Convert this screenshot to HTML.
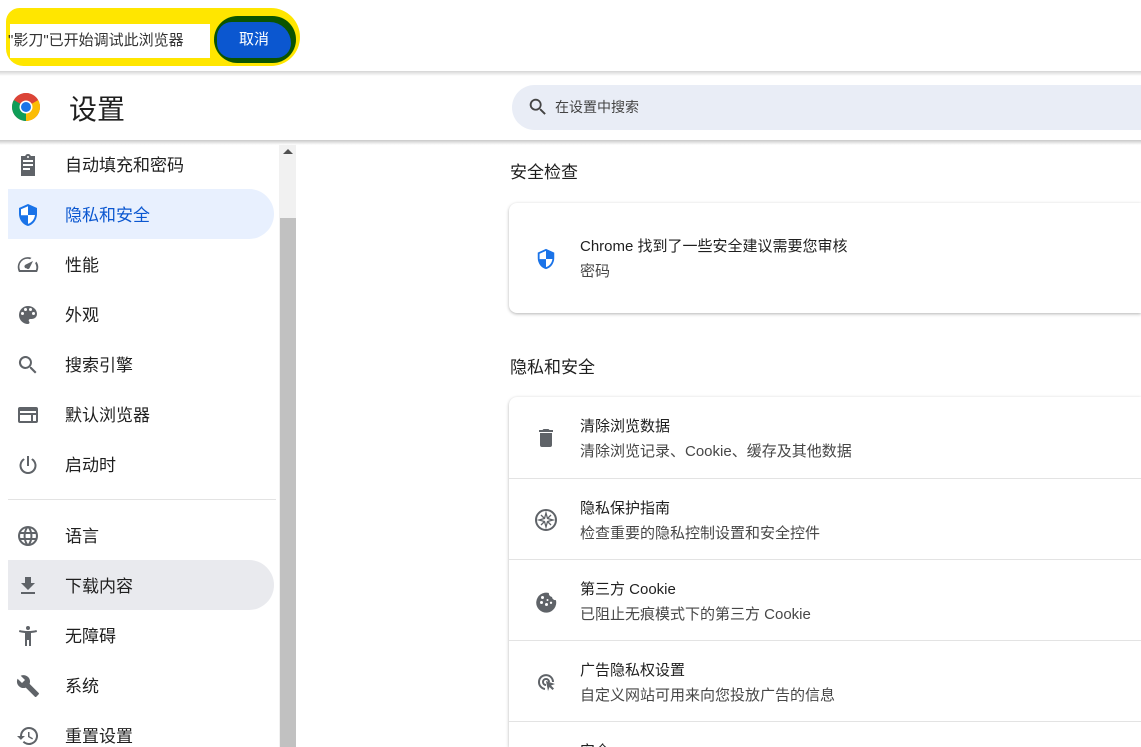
<!DOCTYPE html>
<html><head><meta charset="utf-8"><style>
*{margin:0;padding:0;box-sizing:border-box}
html,body{width:1141px;height:747px;overflow:hidden}
body{background:#fff;font-family:"Liberation Sans","Noto Sans CJK SC",sans-serif;color:#1f1f1f;position:relative}
.abs{position:absolute}
.side{font-size:17px;color:#1f1f1f}
.item{position:absolute;left:8px;width:266px;height:50px}
.item span{position:absolute;left:57px;top:15px;line-height:24px}
.item svg{position:absolute;left:8px;top:14px}
.row{position:absolute;left:509px;width:632px;height:81px;border-top:1px solid #e3e3e3;overflow:hidden}
.row .t{position:absolute;left:71px;top:20px;font-size:15px;color:#1f1f1f;line-height:20px}
.row .s{position:absolute;left:71px;top:45px;font-size:15px;color:#474747;line-height:20px}
.row svg{position:absolute;left:25px;top:29px}
</style></head><body>
<div class="abs" style="left:6px;top:8px;width:294px;height:58px;background:#ffe600;border-radius:14px 30px 30px 18px"></div>
<div class="abs" style="left:10px;top:24px;width:200px;height:34px;background:#fff"></div>
<div class="abs" style="left:8px;top:31px;font-size:15px;color:#333;line-height:20px">"影刀"已开始调试此浏览器</div>
<div class="abs" style="left:214px;top:16px;width:82px;height:47px;background:#0b5400;border-radius:24px"></div>
<div class="abs" style="left:217px;top:22px;width:74px;height:36px;background:#0b57d0;border-radius:18px 26px 18px 18px;color:#fff;font-size:15px;text-align:center;line-height:36px">取消</div>
<div class="abs" style="left:0;top:71px;width:1141px;height:5px;background:linear-gradient(#d5d5d5,#fff)"></div>
<div class="abs" style="left:0;top:140px;width:1141px;height:5px;background:linear-gradient(#c9c9c9,#fff)"></div>
<svg class="abs" style="left:12px;top:93px" width="28" height="28" viewBox="0 0 28 28">
<circle cx="14" cy="14" r="14" fill="#db4437"/>
<path d="M14 14 L26.1 7 A14 14 0 0 1 14 28 Z" fill="#fbbc05"/>
<path d="M14 14 L14 28 A14 14 0 0 1 1.9 7 Z" fill="#0f9d58"/>
<path d="M14 14 L1.9 7 A14 14 0 0 1 26.1 7 Z" fill="#db4437"/>
<circle cx="14" cy="14" r="6.5" fill="#fff"/><circle cx="14" cy="14" r="5" fill="#1a73e8"/></svg>
<div class="abs" style="left:69px;top:92px;font-size:28px;line-height:36px;color:#1f1f1f">设置</div>
<div class="abs" style="left:512px;top:85px;width:629px;height:45px;background:#e9edf6;border-radius:23px 0 0 23px"></div>
<svg class="abs" style="left:527px;top:96px" width="22" height="22" viewBox="0 0 24 24"><path d="M15.5 14h-.8l-.3-.3A6.5 6.5 0 1 0 9.5 16a6.5 6.5 0 0 0 4.2-1.6l.3.3v.8l5 5 1.5-1.5-5-5zm-6 0a4.5 4.5 0 1 1 0-9 4.5 4.5 0 0 1 0 9z" fill="#444"/></svg>
<div class="abs" style="left:555px;top:97px;font-size:14px;color:#444;line-height:20px">在设置中搜索</div>
<div class="abs" style="left:279px;top:145px;width:17px;height:602px;background:#f1f1f1"></div>
<div class="abs" style="left:280px;top:218px;width:16px;height:529px;background:#c1c1c1"></div>
<div class="abs" style="left:283px;top:149px;width:0;height:0;border-left:5px solid transparent;border-right:5px solid transparent;border-bottom:5px solid #505050"></div>
<div class="side">
<div class="item" style="top:139px"><svg width="24" height="24" viewBox="0 0 24 24"><path d="M19 3h-4.2C14.4 1.8 13.3 1 12 1s-2.4.8-2.8 2H5v20h14V3zm-7 0a1 1 0 1 1 0 2 1 1 0 0 1 0-2zm2 14H7v-2h7v2zm3-4H7v-2h10v2zm0-4H7V7h10v2z" fill="#5f6368"/></svg><span>自动填充和密码</span></div>
<div class="item" style="top:189px;background:#e8f0fe;border-radius:0 25px 25px 0"><svg width="24" height="24" viewBox="0 0 24 24"><path d="M12 1L3 5v6c0 5.5 3.8 10.7 9 12 5.2-1.3 9-6.5 9-12V5l-9-4z" fill="#1a73e8"/><path d="M12 3.2v9H5V11.1 6.3zM12 12h7c-.5 4.1-3.3 7.8-7 8.9z" fill="#fff"/></svg><span style="color:#0b57d0">隐私和安全</span></div>
<div class="item" style="top:239px"><svg width="24" height="24" viewBox="0 0 24 24"><path d="M20.4 8.6l-1.3 1.5A7.9 7.9 0 0 1 19.9 17H4.1A8 8 0 0 1 14 6.2l1.5-1.3A10 10 0 0 0 2.5 18L3 19h18l.5-1a10 10 0 0 0-1.1-9.4zM10.6 15.4a2 2 0 0 0 2.8 0L17 8l-7.4 3.6a2 2 0 0 0 1 3.8z" fill="#5f6368"/></svg><span>性能</span></div>
<div class="item" style="top:289px"><svg width="24" height="24" viewBox="0 0 24 24"><path d="M12 3a9 9 0 0 0 0 18c.8 0 1.5-.7 1.5-1.5 0-.4-.1-.7-.4-1-.2-.3-.4-.6-.4-1 0-.8.7-1.5 1.5-1.5H16a5 5 0 0 0 5-5c0-4.4-4-8-9-8zM6.5 12a1.5 1.5 0 1 1 0-3 1.5 1.5 0 0 1 0 3zm3-4a1.5 1.5 0 1 1 0-3 1.5 1.5 0 0 1 0 3zm5 0a1.5 1.5 0 1 1 0-3 1.5 1.5 0 0 1 0 3zm3 4a1.5 1.5 0 1 1 0-3 1.5 1.5 0 0 1 0 3z" fill="#5f6368"/></svg><span>外观</span></div>
<div class="item" style="top:339px"><svg width="24" height="24" viewBox="0 0 24 24"><path d="M15.5 14h-.8l-.3-.3A6.5 6.5 0 1 0 9.5 16a6.5 6.5 0 0 0 4.2-1.6l.3.3v.8l5 5 1.5-1.5-5-5zm-6 0a4.5 4.5 0 1 1 0-9 4.5 4.5 0 0 1 0 9z" fill="#5f6368"/></svg><span>搜索引擎</span></div>
<div class="item" style="top:389px"><svg width="24" height="24" viewBox="0 0 24 24"><path d="M20 4H4a2 2 0 0 0-2 2v12a2 2 0 0 0 2 2h16a2 2 0 0 0 2-2V6a2 2 0 0 0-2-2zm-5 14H4v-6h11v6zm5 0h-3v-6h3v6zm0-8H4V8h16v2z" fill="#5f6368"/></svg><span>默认浏览器</span></div>
<div class="item" style="top:439px"><svg width="24" height="24" viewBox="0 0 24 24"><path d="M11 3h2v10h-2zM16.6 5.4l-1.4 1.4A6.5 6.5 0 1 1 8.8 6.8L7.4 5.4a8.5 8.5 0 1 0 9.2 0z" fill="#5f6368"/></svg><span>启动时</span></div>
<div class="abs" style="left:8px;top:499px;width:268px;height:1px;background:#e3e3e3"></div>
<div class="item" style="top:510px"><svg width="24" height="24" viewBox="0 0 24 24"><path d="M12 2a10 10 0 1 0 0 20 10 10 0 0 0 0-20zm6.9 6h-3a15.7 15.7 0 0 0-1.3-3.6A8 8 0 0 1 18.9 8zM12 4c.8 1.2 1.5 2.5 1.9 4h-3.8c.4-1.4 1.1-2.8 1.9-4zM4.3 14a8 8 0 0 1 0-4h3.4a16 16 0 0 0 0 4H4.3zm.8 2h3a15.7 15.7 0 0 0 1.3 3.6A8 8 0 0 1 5.1 16zm3-8h-3a8 8 0 0 1 4.3-3.6C8.8 5.6 8.4 6.8 8.1 8zM12 20c-.8-1.2-1.5-2.5-1.9-4h3.8c-.4 1.4-1.1 2.8-1.9 4zm2.3-6H9.7a14.7 14.7 0 0 1 0-4h4.6a14.7 14.7 0 0 1 0 4zm.3 5.6c.6-1.1 1.1-2.3 1.3-3.6h3a8 8 0 0 1-4.3 3.6zm1.7-5.6a16 16 0 0 0 0-4h3.4a8 8 0 0 1 0 4h-3.4z" fill="#5f6368"/></svg><span>语言</span></div>
<div class="item" style="top:560px;background:#e9eaee;border-radius:0 25px 25px 0"><svg width="24" height="24" viewBox="0 0 24 24"><path d="M19 9h-4V3H9v6H5l7 7 7-7zM5 18v2h14v-2H5z" fill="#5f6368"/></svg><span>下载内容</span></div>
<div class="item" style="top:610px"><svg width="24" height="24" viewBox="0 0 24 24"><path d="M20.5 6c-2.6.7-5.6 1-8.5 1s-5.9-.3-8.5-1L3 8c1.9.5 4 .8 6 1v13h2v-6h2v6h2V9c2-.2 4.1-.5 6-1l-.5-2zM12 6a2 2 0 1 0 0-4 2 2 0 0 0 0 4z" fill="#5f6368"/></svg><span>无障碍</span></div>
<div class="item" style="top:660px"><svg width="24" height="24" viewBox="0 0 24 24"><path d="M22.7 19l-9.1-9.1c.9-2.3.4-5-1.5-6.9-2-2-5-2.4-7.4-1.3L9 6 6 9 1.6 4.7C.4 7.1.9 10.1 2.9 12.1c1.9 1.9 4.6 2.4 6.9 1.5l9.1 9.1c.4.4 1 .4 1.4 0l2.3-2.3c.5-.4.5-1.1.1-1.4z" fill="#5f6368"/></svg><span>系统</span></div>
<div class="item" style="top:710px;height:37px;overflow:hidden"><svg width="24" height="24" viewBox="0 0 24 24"><path d="M13 3a9 9 0 0 0-9 9H1l3.9 3.9L9 12H6a7 7 0 1 1 2.1 5l-1.4 1.4A9 9 0 1 0 13 3zm-1 5v5l4.3 2.5.7-1.2-3.5-2.1V8H12z" fill="#5f6368"/></svg><span>重置设置</span></div>
</div>
<div class="abs" style="left:510px;top:161px;font-size:17px;line-height:24px">安全检查</div>
<div class="abs" style="left:509px;top:203px;width:632px;height:110px;border-radius:8px 0 0 8px;box-shadow:0 1px 3px rgba(0,0,0,.3);background:#fff"></div>
<svg class="abs" style="left:535px;top:247px" width="22" height="24" viewBox="0 0 24 24"><path d="M12 1L3 5v6c0 5.5 3.8 10.7 9 12 5.2-1.3 9-6.5 9-12V5l-9-4z" fill="#1a73e8"/><path d="M12 3.2v9H5V11.1 6.3zM12 12h7c-.5 4.1-3.3 7.8-7 8.9z" fill="#fff"/></svg>
<div class="abs" style="left:580px;top:237px;font-size:15px;line-height:20px">Chrome 找到了一些安全建议需要您审核</div>
<div class="abs" style="left:580px;top:262px;font-size:15px;line-height:20px;color:#474747">密码</div>
<div class="abs" style="left:510px;top:356px;font-size:17px;line-height:24px">隐私和安全</div>
<div class="abs" style="left:509px;top:397px;width:632px;height:350px;border-radius:8px 0 0 0;box-shadow:0 1px 3px rgba(0,0,0,.3);background:#fff"></div>
<div class="row" style="top:397px;border-top:none"><svg width="24" height="24" viewBox="0 0 24 24"><path d="M6 19a2 2 0 0 0 2 2h8a2 2 0 0 0 2-2V7H6v12zM19 4h-3.5l-1-1h-5l-1 1H5v2h14V4z" fill="#5f6368"/></svg><div class="t">清除浏览数据</div><div class="s">清除浏览记录、Cookie、缓存及其他数据</div></div>
<div class="row" style="top:478px"><svg width="24" height="24" viewBox="0 0 24 24"><circle cx="12" cy="12" r="10" fill="none" stroke="#5f6368" stroke-width="2"/><path d="M12 5l1.5 5.5L19 12l-5.5 1.5L12 19l-1.5-5.5L5 12l5.5-1.5z M7 7l3.5 3.5M17 7l-3.5 3.5M7 17l3.5-3.5M17 17l-3.5-3.5" fill="none" stroke="#5f6368" stroke-width="1.3"/></svg><div class="t">隐私保护指南</div><div class="s">检查重要的隐私控制设置和安全控件</div></div>
<div class="row" style="top:559px"><svg width="24" height="24" viewBox="0 0 24 24"><path d="M21.9 11.1A3.5 3.5 0 0 1 18 8a3.5 3.5 0 0 1-3.1-4A10 10 0 1 0 21.9 11.1zM8.5 10a1.5 1.5 0 1 1 0-3 1.5 1.5 0 0 1 0 3zm-1 5a1.5 1.5 0 1 1 0-3 1.5 1.5 0 0 1 0 3zm5 2a1.5 1.5 0 1 1 0-3 1.5 1.5 0 0 1 0 3zm1-5a1 1 0 1 1 0-2 1 1 0 0 1 0 2zm3.5 3a1.2 1.2 0 1 1 0-2.4 1.2 1.2 0 0 1 0 2.4z" fill="#5f6368"/></svg><div class="t">第三方 Cookie</div><div class="s">已阻止无痕模式下的第三方 Cookie</div></div>
<div class="row" style="top:640px"><svg width="24" height="24" viewBox="0 0 24 24"><path d="M11 19a7 7 0 1 1 8-7M12 15a3 3 0 1 1 3-3" fill="none" stroke="#5f6368" stroke-width="2"/><path d="M12 11l9 3-4 1.5 3 3-1.5 1.5-3-3L14 21z" fill="#5f6368"/></svg><div class="t">广告隐私权设置</div><div class="s">自定义网站可用来向您投放广告的信息</div></div>
<div class="row" style="top:721px;height:26px"><div class="t">安全</div></div>
</body></html>
